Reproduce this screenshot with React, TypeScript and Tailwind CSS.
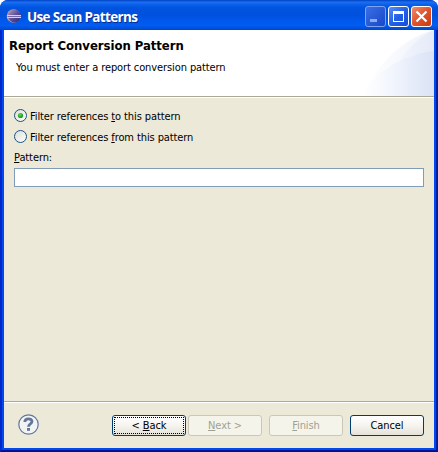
import type { ReactNode } from "react";

function EclipseIcon() {
  return (
    <svg width="16" height="16" viewBox="0 0 16 16" className="shrink-0">
      <defs>
        <linearGradient id="orb" x1="0" y1="0" x2="1" y2="1">
          <stop offset="0" stopColor="#a99bc8" />
          <stop offset="0.5" stopColor="#5c5098" />
          <stop offset="1" stopColor="#2b2469" />
        </linearGradient>
      </defs>
      <circle cx="7.5" cy="7" r="6.8" fill="#b598a8" />
      <circle cx="8.5" cy="7" r="6.4" fill="url(#orb)" />
      <path d="M1 6.5h14M1 8.5h14" stroke="#d5cfe9" strokeWidth="1" />
      <path d="M2 7.5h13" stroke="#6f69ad" strokeWidth="1" />
    </svg>
  );
}

function TitleButton({ kind }: { kind: "min" | "max" | "close" }) {
  const fill = { min: "url(#dim)", max: "url(#blue)", close: "url(#red)" }[kind];
  return (
    <svg width="21" height="21" viewBox="0 0 21 21" className="shrink-0">
      <defs>
        <linearGradient id="dim" x1="0" y1="0" x2="1" y2="1">
          <stop offset="0" stopColor="#3b6fe6" />
          <stop offset="1" stopColor="#1747c9" />
        </linearGradient>
        <linearGradient id="blue" x1="0" y1="0" x2="1" y2="1">
          <stop offset="0" stopColor="#5b92f5" />
          <stop offset="0.5" stopColor="#2360e6" />
          <stop offset="1" stopColor="#124fd6" />
        </linearGradient>
        <linearGradient id="red" x1="0" y1="0" x2="1" y2="1">
          <stop offset="0" stopColor="#f0916f" />
          <stop offset="0.5" stopColor="#e1512b" />
          <stop offset="1" stopColor="#c93a10" />
        </linearGradient>
      </defs>
      <rect x="0.5" y="0.5" width="20" height="20" rx="2.5" fill={fill} stroke={kind === "min" ? "#7fa3f0" : "#fff"} />
      {kind === "min" && <rect x="5" y="13" width="7" height="3" fill="#90aaf0" />}
      {kind === "max" && <path d="M5 5h11v11H5zM6 8v7h9V8z" fill="#fff" fillRule="evenodd" />}
      {kind === "close" && <path d="M5.5 5.5l10 10M15.5 5.5l-10 10" stroke="#fff" strokeWidth="2.2" />}
    </svg>
  );
}

function BannerArt() {
  return (
    <svg width="94" height="66" viewBox="0 0 94 66" className="shrink-0">
      <defs>
        <linearGradient id="sweep" x1="0" y1="0" x2="1" y2="0">
          <stop offset="0" stopColor="#fff" />
          <stop offset="1" stopColor="#eef2fb" />
        </linearGradient>
        <linearGradient id="mid" x1="0" y1="0" x2="1" y2="0">
          <stop offset="0" stopColor="#f4f7fd" />
          <stop offset="1" stopColor="#e5eaf8" />
        </linearGradient>
        <linearGradient id="low" x1="0" y1="0" x2="1" y2="0">
          <stop offset="0" stopColor="#fff" />
          <stop offset="0.4" stopColor="#f2f6fd" />
          <stop offset="1" stopColor="#dae2f5" />
        </linearGradient>
      </defs>
      <path d="M23 66C34 38 62 8 94 0V66z" fill="url(#sweep)" />
      <path d="M53 42C63 23 78 7 94 0V42z" fill="url(#mid)" />
      <path d="M23 66C29 46 62 24 94 21V66z" fill="url(#low)" />
    </svg>
  );
}

function Radio({ checked, children }: { checked?: boolean; children: ReactNode }) {
  return (
    <label className="flex h-[21px] items-center">
      <svg width="13" height="13" viewBox="0 0 13 13" className="shrink-0">
        <defs>
          <linearGradient id="well" x1="0" y1="0" x2="1" y2="1">
            <stop offset="0" stopColor="#dcdcd7" />
            <stop offset="1" stopColor="#fff" />
          </linearGradient>
          <radialGradient id="dot" cx="0.4" cy="0.35">
            <stop offset="0" stopColor="#5fd85c" />
            <stop offset="1" stopColor="#22a121" />
          </radialGradient>
        </defs>
        <circle cx="6.5" cy="6.5" r="6" fill="url(#well)" stroke="#1d5281" />
        {checked && <circle cx="6.5" cy="6.5" r="2.6" fill="url(#dot)" />}
      </svg>
      <span className="ml-[3px] pt-[2px] leading-[14px]">{children}</span>
    </label>
  );
}

function Key({ children }: { children: ReactNode }) {
  return <span className="underline decoration-1 underline-offset-[1px] [text-decoration-skip-ink:none]">{children}</span>;
}

const buttonBase = "flex h-[21px] w-[74px] shrink-0 items-center justify-center rounded-[3px] border pt-[1px] leading-[14px]";
const enabled = "border-[#003c74] bg-linear-to-b from-white via-[#f5f4ef] to-[#e5e2d8]";
const disabled = "border-[#c9c7ba] bg-[#f5f4ea] text-[#a1a192]";

export default function App() {
  return (
    <div className="h-[452px] w-[438px] bg-white font-['DejaVu_Sans_Condensed','DejaVu_Sans',sans-serif] text-[11px] tracking-[-0.1px] text-black">
      <div className="flex h-full flex-col overflow-hidden rounded-t-[8px] bg-[#0046e0]">
        <header className="flex h-[30px] shrink-0 items-center bg-[linear-gradient(to_bottom,#0040c4_0,#1a70ee_7%,#0c62ec_14%,#0054e0_25%,#0050de_50%,#0058ec_70%,#005cf2_85%,#0051dc_94%,#0044c8_100%)] pr-[6px] pl-[6px] pt-[3px]">
          <EclipseIcon />
          <h1 className="ml-[5px] whitespace-nowrap font-['Open_Sans','Noto_Sans',sans-serif] text-[13.5px] leading-[18px] font-bold tracking-[-0.65px] text-white [text-shadow:1px_1px_0_#0b2c91]">
            Use Scan Patterns
          </h1>
          <div className="ml-auto flex gap-[2px]">
            <TitleButton kind="min" />
            <TitleButton kind="max" />
            <TitleButton kind="close" />
          </div>
        </header>
        <div className="flex min-h-0 flex-1 border-x-2 border-b-2 border-r-[#001ea0] border-b-[#00138c] border-l-[#0028c8]">
          <main className="flex flex-1 flex-col border-x-2 border-b-2 border-[#0048f0] bg-[#ece9d8]">
            <section className="flex h-[66px] shrink-0 justify-between bg-white">
              <div className="whitespace-nowrap pl-[5px] pt-[7px]">
                <h2 className="text-[13px] leading-[18px] font-bold tracking-[-0.04px]">Report Conversion Pattern</h2>
                <p className="mt-[6px] pl-[7px] leading-[14px]">You must enter a report conversion pattern</p>
              </div>
              <BannerArt />
            </section>
            <div className="h-[2px] shrink-0 border-t border-[#aca899] bg-white" />
            <section className="flex flex-1 flex-col px-[10px] pt-[7px]">
              <Radio checked>Filter references <Key>t</Key>o this pattern</Radio>
              <Radio>Filter references <Key>f</Key>rom this pattern</Radio>
              <span className="mt-[4px] leading-[14px]"><Key>P</Key>attern:</span>
              <input aria-label="Pattern" className="mt-[3px] h-[19px] w-full border border-[#7f9db9] bg-white px-1 outline-none" />
            </section>
            <div className="h-[2px] shrink-0 border-t border-[#aca899] bg-white" />
            <footer className="flex h-[45px] shrink-0 items-center pr-[10px] pl-[14px]">
              <svg width="21" height="21" viewBox="0 0 21 21" className="-mt-[2px] shrink-0">
                <circle cx="10.5" cy="10.5" r="9.7" fill="#f2f3f5" stroke="#62779a" strokeWidth="1.2" />
                <path d="M6.8 8.1C6.8 3.9 14 3.9 14 7.6C14 10 10.5 9.8 10.5 12.8" fill="none" stroke="#62779a" strokeWidth="2.8" />
                <rect x="9" y="14" width="3" height="2.8" fill="#62779a" />
              </svg>
              <div className="ml-auto flex">
                <button className={`${buttonBase} ${enabled} relative`}>
                  <span className="absolute inset-[1px] border border-dotted border-black" />
                  <span>&lt; <Key>B</Key>ack</span>
                </button>
                <button disabled className={`${buttonBase} ${disabled} ml-[2px]`}><span><Key>N</Key>ext &gt;</span></button>
                <button disabled className={`${buttonBase} ${disabled} ml-[7px]`}><span><Key>F</Key>inish</span></button>
                <button className={`${buttonBase} ${enabled} ml-[7px]`}>Cancel</button>
              </div>
            </footer>
          </main>
        </div>
      </div>
    </div>
  );
}
